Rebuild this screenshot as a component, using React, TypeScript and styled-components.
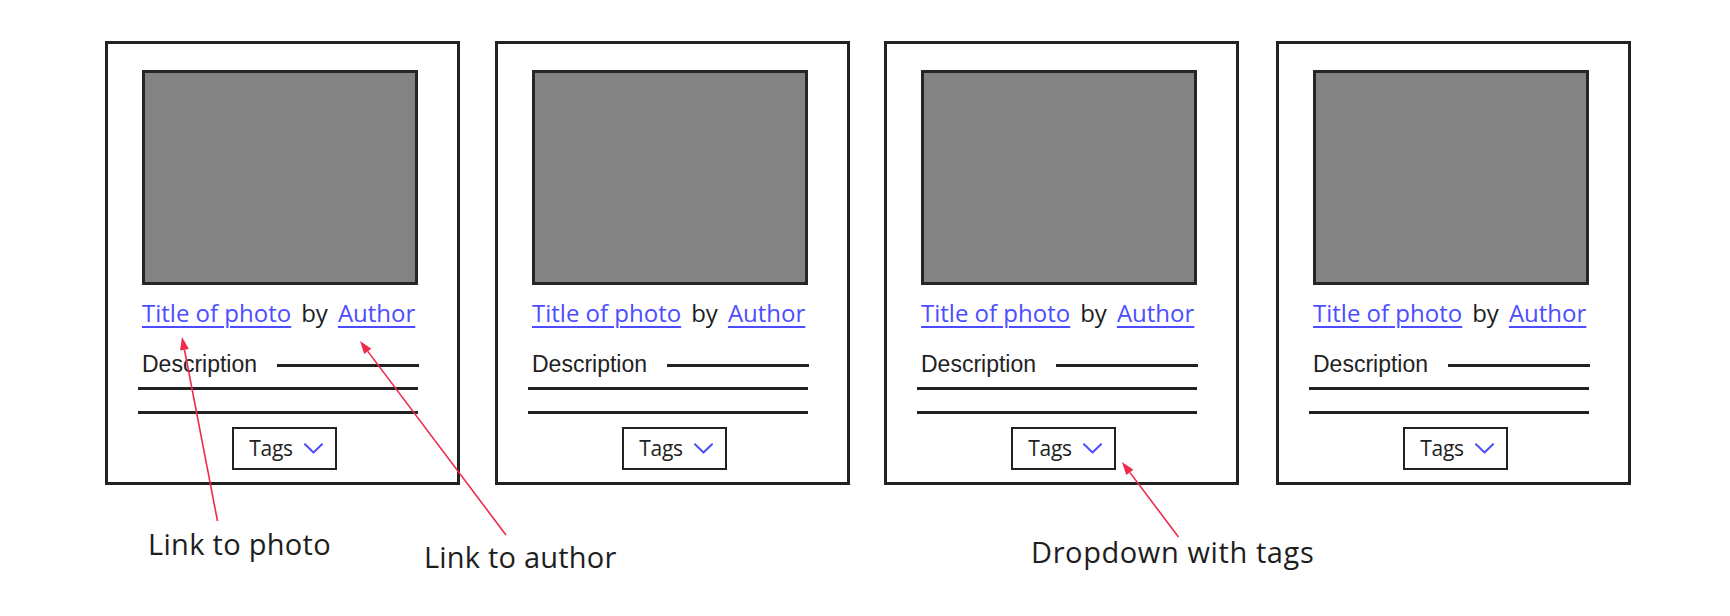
import React from "react";
import styled, { createGlobalStyle } from "styled-components";

const GlobalStyle = createGlobalStyle`
  html, body {
    margin: 0;
    padding: 0;
    background: #ffffff;
  }
  body {
    font-family: "Open Sans", "Noto Sans", sans-serif;
  }
`;

const Stage = styled.div`
  position: relative;
  width: 1730px;
  height: 616px;
  box-sizing: border-box;
  padding: 41px 0 0 105px;
  background: #ffffff;
  overflow: hidden;
`;

const CardRow = styled.div`
  display: flex;
`;

const Card = styled.div<{ $offset: number }>`
  width: 355px;
  height: 444px;
  margin-left: ${(p) => p.$offset}px;
  box-sizing: border-box;
  border: 3px solid #222222;
  padding: 26px 38px 0 34px;
  display: flex;
  flex-direction: column;
  align-items: stretch;
`;

const Photo = styled.div`
  width: 276px;
  height: 215px;
  box-sizing: border-box;
  border: 3px solid #262626;
  background: #838383;
`;

const Byline = styled.div`
  margin-top: 12px;
  display: flex;
  align-items: baseline;
  gap: 10px;
  font-family: "Open Sans", "Noto Sans", sans-serif;
  font-size: 24px;
  line-height: 32px;
  color: #1c1c1c;
  letter-spacing: 0;
`;

const Link = styled.a`
  color: #4d4dff;
  text-decoration: underline;
  text-decoration-thickness: 1.5px;
  text-underline-offset: 4px;
  cursor: pointer;
`;

const DescriptionRow = styled.div`
  margin-top: 22px;
  display: flex;
  align-items: flex-start;
`;

const DescriptionText = styled.span`
  font-family: "Liberation Sans", Arial, sans-serif;
  font-size: 23px;
  line-height: 26px;
  color: #222222;
`;

const InlineRule = styled.div`
  flex: 1;
  height: 3px;
  margin: 13px 0 0 20px;
  background: #222222;
`;

const FullRule = styled.div<{ $gap: number }>`
  margin-top: ${(p) => p.$gap}px;
  margin-left: -4px;
  width: 280px;
  height: 3px;
  background: #222222;
`;

const TagsButton = styled.button`
  align-self: center;
  margin: 13px 0 0 8px;
  width: 105px;
  height: 43px;
  box-sizing: border-box;
  border: 2.5px solid #222222;
  background: #ffffff;
  display: flex;
  align-items: center;
  justify-content: center;
  gap: 11px;
  padding: 0 0 0 3px;
  font-family: "Open Sans", "Noto Sans", sans-serif;
  font-size: 21px;
  line-height: 1;
  color: #222222;
  letter-spacing: -0.3px;
`;

const Chevron = () => (
  <svg width="19" height="11" viewBox="0 0 19 11" aria-hidden="true">
    <polyline
      points="1,1.2 9.5,9.5 18,1.2"
      fill="none"
      stroke="#4d4dff"
      strokeWidth="2"
      strokeLinecap="round"
      strokeLinejoin="round"
    />
  </svg>
);

const Overlay = styled.svg`
  position: absolute;
  left: 0;
  top: 0;
  width: 1730px;
  height: 616px;
  pointer-events: none;
`;

const Label = styled.div<{ $left: number; $top: number; $spacing?: number }>`
  position: absolute;
  left: ${(p) => p.$left}px;
  top: ${(p) => p.$top}px;
  font-family: "Open Sans", "Noto Sans", sans-serif;
  font-size: 29px;
  line-height: 40px;
  color: #1e1e1e;
  white-space: nowrap;
  letter-spacing: ${(p) => p.$spacing ?? 0}px;
`;

type ArrowProps = { x1: number; y1: number; x2: number; y2: number };

// x1,y1 = tail; x2,y2 = tip
const Arrow = ({ x1, y1, x2, y2 }: ArrowProps) => {
  const dx = x2 - x1;
  const dy = y2 - y1;
  const len = Math.sqrt(dx * dx + dy * dy);
  const ux = dx / len;
  const uy = dy / len;
  const headLen = 13;
  const headW = 4.5;
  const bx = x2 - ux * headLen;
  const by = y2 - uy * headLen;
  const px = -uy;
  const py = ux;
  const pts = `${x2},${y2} ${bx + px * headW},${by + py * headW} ${bx - px * headW},${by - py * headW}`;
  return (
    <g>
      <line x1={x1} y1={y1} x2={bx} y2={by} stroke="#ef2b4d" strokeWidth="1.6" />
      <polygon points={pts} fill="#ef2b4d" />
    </g>
  );
};

const cardOffsets = [0, 35, 34, 37];

export default function App() {
  return (
    <>
      <GlobalStyle />
      <Stage>
        <CardRow>
          {cardOffsets.map((offset, i) => (
            <Card key={i} $offset={offset}>
              <Photo />
              <Byline>
                <Link>Title of photo</Link>
                <span>by</span>
                <Link>Author</Link>
              </Byline>
              <DescriptionRow>
                <DescriptionText>Description</DescriptionText>
                <InlineRule />
              </DescriptionRow>
              <FullRule $gap={10} />
              <FullRule $gap={21} />
              <TagsButton>
                <span>Tags</span>
                <Chevron />
              </TagsButton>
            </Card>
          ))}
        </CardRow>
        <Overlay viewBox="0 0 1730 616">
          <Arrow x1={217.5} y1={521} x2={182} y2={337} />
          <Arrow x1={506} y1={535} x2={360} y2={341} />
          <Arrow x1={1178.5} y1={537} x2={1122} y2={462} />
        </Overlay>
        <Label $left={148} $top={524} $spacing={0.3}>Link to photo</Label>
        <Label $left={424} $top={537} $spacing={0.2}>Link to author</Label>
        <Label $left={1031} $top={532} $spacing={0.6}>Dropdown with tags</Label>
      </Stage>
    </>
  );
}
